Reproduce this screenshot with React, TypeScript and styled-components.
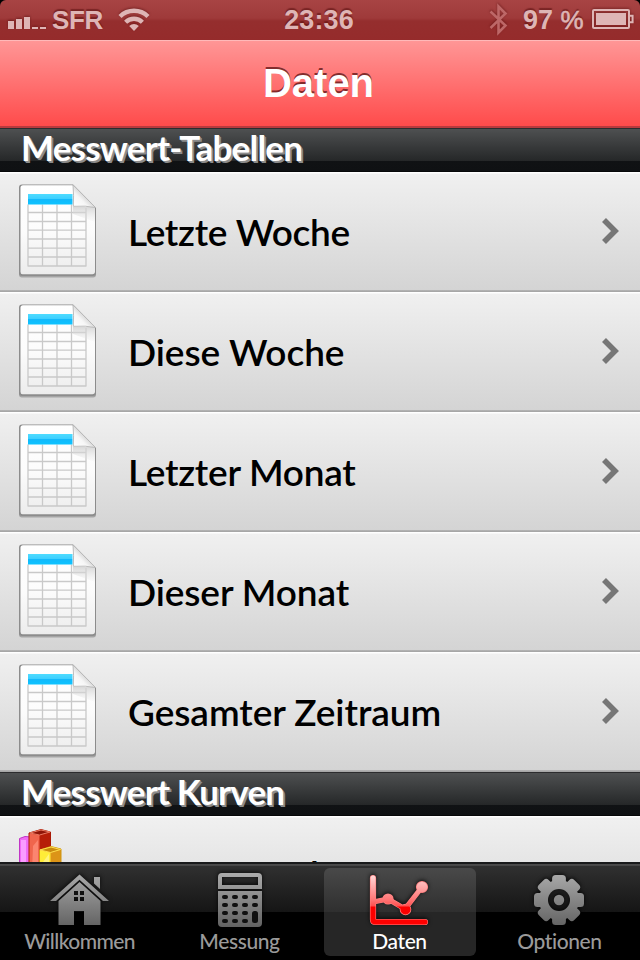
import React from "react";
import styled, { createGlobalStyle, css } from "styled-components";

const GlobalStyle = createGlobalStyle`
  * { box-sizing: border-box; }
  body { margin: 0; background: #000; }
`;

const Screen = styled.div`
  width: 640px;
  height: 960px;
  display: flex;
  flex-direction: column;
  overflow: hidden;
  background: #000;
  font-family: "Lato", sans-serif;
`;

const StatusBar = styled.header`
  flex: none;
  height: 40px;
  display: grid;
  grid-template-columns: 1fr 90px 1fr;
  align-items: center;
  border-radius: 6px 6px 0 0;
  background: linear-gradient(#a84444 0, #9f3a3a 18px, #952e2e 21px, #952b2b 100%);
  color: #deb5b5;
  font: 700 27px/40px "Liberation Sans", Arial, sans-serif;
  text-shadow: 0 -2px 1px rgba(80, 10, 10, 0.5);
  svg {
    display: block;
    filter: drop-shadow(0 -1px 1px rgba(80, 10, 10, 0.5));
  }
`;

const StatusGroup = styled.div<{ $end?: boolean }>`
  display: flex;
  height: 40px;
  align-items: center;
  justify-content: ${(p) => (p.$end ? "flex-end" : "flex-start")};
  padding: ${(p) => (p.$end ? "0 4px 0 0" : "0 0 0 8px")};
`;

const Carrier = styled.span`
  width: 66px;
  margin-left: 6px;
  font-size: 26px;
  letter-spacing: -0.3px;
`;

const Clock = styled.span`
  text-align: center;
  letter-spacing: 0.1px;
  padding-right: 2px;
`;

const Charge = styled.span`
  width: 62px;
  margin: 0 7px 0 14px;
  white-space: nowrap;
`;

const Percent = styled.span`
  font-weight: 400;
  font-size: 26px;
  -webkit-text-stroke: 0.6px #deb5b5;
`;

const TitleBar = styled.h1`
  flex: none;
  height: 88px;
  margin: 0;
  padding-right: 3px;
  border-top: 1px solid #ffb9b9;
  border-bottom: 2px solid #b83a3e;
  background: linear-gradient(#ff9696, #ff4b4b);
  color: #fff;
  text-align: center;
  font: 700 40px/84px "Liberation Sans", Arial, sans-serif;
  text-shadow: 0 -2px 0 rgba(90, 20, 20, 0.75);
`;

const List = styled.main`
  flex: 1;
  min-height: 0;
  overflow: hidden;
`;

const SectionTitle = styled.h2`
  height: 44px;
  margin: 0;
  padding-left: 21px;
  border-top: 1px solid #2c2c2e;
  background: linear-gradient(#4e5051 0, #252728 32px, #101214 32px, #0f1113 42px, #000 100%);
  color: #fff;
  font-size: 35px;
  font-weight: 700;
  line-height: 36px;
  letter-spacing: -0.8px;
  text-shadow: 1px 1px 0 #8b8b8b, 2px 2px 0 #8b8b8b;
`;

const Row = styled.div`
  height: 120px;
  display: flex;
  align-items: center;
  padding: 0 20px 0 16px;
  background: linear-gradient(#fff 0, #fff 1px, #f0f0f0 2px, #d4d4d4 118px, #b5b5b5 118px, #a2a2a2 120px);
  svg { flex: none; display: block; }
`;

const RowLabel = styled.span<{ $spacing?: number; $lift?: number }>`
  flex: 1;
  padding-left: 2px;
  padding-bottom: ${(p) => p.$lift ?? 0}px;
  color: #000;
  font-size: 37px;
  font-weight: 600;
  line-height: ${(p) => 120 - (p.$lift ?? 0)}px;
  letter-spacing: ${(p) => p.$spacing ?? 0}px;
  white-space: nowrap;
`;

const TabBar = styled.nav`
  flex: none;
  height: 98px;
  display: grid;
  grid-template-columns: repeat(4, 160px);
  padding-top: 6px;
  background: linear-gradient(#191a1b 0, #191a1b 2px, #4c4c4c 2px, #454545 4px, #303030 4px, #151515 50px, #000 50px);
`;

const Tab = styled.div<{ $active?: boolean }>`
  height: 88px;
  margin: 0 4px;
  padding-top: 2px;
  display: flex;
  flex-direction: column;
  align-items: center;
  border-radius: 6px;
  color: ${(p) => (p.$active ? "#fff" : "#9a9a9a")};
  ${(p) =>
    p.$active &&
    css`
      background: linear-gradient(#494949 0, #2f2f2f 44px, #262626 44px);
    `}
  svg { display: block; filter: drop-shadow(0 -1px 2px rgba(0, 0, 0, 0.8)); }
`;

const TabLabel = styled.span<{ $spacing: number }>`
  padding-right: 1px;
  font-size: 21px;
  font-weight: 500;
  line-height: 22px;
  letter-spacing: ${(p) => p.$spacing}px;
`;

function SignalIcon() {
  return (
    <svg width="38" height="40" viewBox="8 0 38 40" fill="#deb5b5" shapeRendering="crispEdges">
      <path d="M8 21h6v8H8zM16 19h6v10h-6zM24 17h6v12h-6zM32 27h6v2h-6zM40 27h6v2h-6z" />
    </svg>
  );
}

function WifiIcon() {
  return (
    <svg width="32" height="40" viewBox="0 0 32 40" fill="none" stroke="#deb5b5" strokeWidth="4.4">
      <path d="M2 16.500a20 20 0 0 1 28 0" />
      <path d="M7.6 22.200a12 12 0 0 1 16.8 0" />
      <path d="M16 31l-4.800-5a7 7 0 0 1 9.600 0z" fill="#deb5b5" stroke="none" />
    </svg>
  );
}

function BluetoothIcon() {
  return (
    <svg width="20" height="40" viewBox="0 0 20 40" fill="none" stroke="#bd6767" strokeWidth="2.6">
      <path d="M1.500 11.500L16.500 25.500L9.500 32.500V6.500L16.500 13.500L1.500 28" />
    </svg>
  );
}

function BatteryIcon() {
  return (
    <svg width="44" height="40" viewBox="0 0 44 40">
      <rect x="1" y="10" width="36" height="18" rx="1" fill="none" stroke="#deb5b5" strokeWidth="2" />
      <rect x="4" y="13" width="30" height="12" fill="#deb5b5" />
      <path d="M38 15.800h2.600v6.400H38" fill="none" stroke="#deb5b5" strokeWidth="2" />
    </svg>
  );
}

function SheetIcon() {
  return (
    <svg width="110" height="120" viewBox="16 0 110 120">
      <defs>
        <linearGradient id="paper" x1="0" y1="0" x2="0" y2="1">
          <stop offset="0" stopColor="#fff" />
          <stop offset="0.5" stopColor="#fcfcfc" />
          <stop offset="1" stopColor="#ececec" />
        </linearGradient>
        <linearGradient id="band" x1="0" y1="0" x2="0" y2="1">
          <stop offset="0" stopColor="#4fdcff" />
          <stop offset="0.45" stopColor="#3ccfff" />
          <stop offset="0.5" stopColor="#12b9fb" />
          <stop offset="1" stopColor="#0dc3ff" />
        </linearGradient>
        <linearGradient id="curl" gradientUnits="userSpaceOnUse" x1="74" y1="35" x2="86" y2="23">
          <stop offset="0" stopColor="#fff" />
          <stop offset="0.6" stopColor="#f6f6f6" />
          <stop offset="1" stopColor="#cfcfcf" />
        </linearGradient>
        <linearGradient id="shade" gradientUnits="userSpaceOnUse" x1="0" y1="35" x2="0" y2="52">
          <stop offset="0" stopColor="#cfcfcf" stopOpacity="0.8" />
          <stop offset="1" stopColor="#e8e8e8" stopOpacity="0" />
        </linearGradient>
      </defs>
      <path d="M22 15.500H73L96 38V102.500q0 3-3 3H22q-3 0-3-3V18q0-2.500 3-2.500z" fill="#666" opacity=".45" />
      <path d="M22 12.500H73L96 36V101q0 3-3 3H22q-3 0-3-3V15.500q0-3 3-3z" fill="#8c8c8c" />
      <path d="M23 13.200H72.500L95 35.500V99.500q0 2.700-2.700 2.700H22.500q-2 0-2-2.500V15.700q0-2.500 2.500-2.500z" fill="url(#paper)" />
      <path
        d="M28 32.500V94.500M42.500 32.500V94.500M57 32.500V94.500M71.500 32.500V94.500M86 36V94.500M28 40.500H86M28 49.500H86M28 58.200H86M28 67H86M28 76.200H86M28 85H86M28 94H86"
        fill="none"
        stroke="#c9c9c9"
        strokeWidth="1.300"
      />
      <rect x="28" y="22" width="44.500" height="10.500" fill="url(#band)" />
      <path d="M73 35H95V50L84 46L73 42z" fill="url(#shade)" />
      <path d="M73 12.800Q74 24 73.300 34.300Q86 33.500 95.500 35.500z" fill="url(#curl)" stroke="#b4b4b4" strokeWidth="0.900" />
    </svg>
  );
}

function BarsIcon() {
  return (
    <svg width="110" height="120" viewBox="16 0 110 120">
      <path d="M19.500 22.500L25 20.500L31 21V80H19.500z" fill="#f06cf4" stroke="#c135c6" />
      <path d="M21 24H26V80H21z" fill="#fa9dff" />
      <path d="M29 17L41 13.500L50.500 16V80H29z" fill="#b61d08" stroke="#a91804" />
      <path d="M29.500 17.500L39.500 19V80H29.500z" fill="#f0654d" />
      <path d="M30 17L41 14L50 16L39.500 19z" fill="#8f1408" stroke="#e97a62" />
      <path d="M33 30L38 24V80H31z" fill="#ff937f" opacity=".7" />
      <path d="M39.500 34L51 30.500L61 33V80H39.500z" fill="#dc9417" stroke="#cf9610" />
      <path d="M40 34L50.500 36.500V80H40z" fill="#ffec38" />
      <path d="M40 34L51 31L60.500 33.500L50.500 36.500z" fill="#c98a0d" stroke="#ffe04e" />
      <path d="M43 46L49 38V80H43z" fill="#fff69a" opacity=".7" />
    </svg>
  );
}

function Chevron() {
  return (
    <svg width="20" height="28" viewBox="600 46 20 28" fill="none" stroke="#767676" strokeWidth="5.600">
      <path d="M604 48L615 59L604 70" />
    </svg>
  );
}

function TabGradient() {
  return (
    <defs>
      <linearGradient id="metal" gradientUnits="userSpaceOnUse" x1="0" y1="4" x2="0" y2="57">
        <stop offset="0" stopColor="#a9a9a9" />
        <stop offset="1" stopColor="#626262" />
      </linearGradient>
    </defs>
  );
}

function HomeIcon() {
  return (
    <svg width="64" height="60" viewBox="0 0 64 60" fill="url(#metal)">
      <TabGradient />
      <path d="M46 7H52V19L46 13.500z" />
      <path d="M31.500 4.500L61 31H55L31.500 9.800L8 31H2z" />
      <path
        fillRule="evenodd"
        d="M31.500 12L52.500 31V55H36V41H26V55H10.500V31zM26 21V25H30V21zM32 21V25H36V21zM26 27V31H30V27zM32 27V31H36V27z"
      />
    </svg>
  );
}

function CalculatorIcon() {
  const columns = [17, 27, 37, 47];
  const rows = [27, 35, 43, 51];
  return (
    <svg width="64" height="60" viewBox="0 0 64 60">
      <path fillRule="evenodd" fill="url(#metal)" d="M14 3H50Q54 3 54 7V19H10V7Q10 3 14 3zM14 7V15H50V7z" />
      <path fill="url(#metal)" d="M10 21H54V53Q54 57 50 57H14Q10 57 10 53z" />
      <g fill="#101010">
        {rows.map((y, r) =>
          columns.map((x, c) =>
            c === 3 && r > 1 ? null : <rect key={`${r}-${c}`} x={x - 3} y={y - 2} width="6" height="4" rx="2" />
          )
        )}
        <rect x="44" y="41" width="6" height="12" rx="2.500" />
      </g>
    </svg>
  );
}

function ChartIcon() {
  const axes = "M5 8V49.500Q5 52 7.500 52H57";
  const trend = "M5 32L20 29L37 39L54 17";
  const dots = [[20, 29, 4.8], [37.5, 39.5, 5], [54, 17, 5.3]];
  return (
    <svg width="64" height="60" viewBox="0 0 64 60" strokeLinecap="round" strokeLinejoin="round">
      <defs>
        <linearGradient id="ember" gradientUnits="userSpaceOnUse" x1="0" y1="5" x2="0" y2="55">
          <stop offset="0" stopColor="#ffd9d9" />
          <stop offset="0.500" stopColor="#ff7474" />
          <stop offset="0.620" stopColor="#ff5050" />
          <stop offset="0.640" stopColor="#fa0000" />
          <stop offset="1" stopColor="#ff0000" />
        </linearGradient>
      </defs>
      <g fill="none" stroke="#ff8080">
        <path d={axes} strokeWidth="6.200" />
        <path d={trend} strokeWidth="5.200" />
        {dots.map(([x, y, r]) => <circle key={x} cx={x} cy={y} r={r} strokeWidth="1.600" />)}
      </g>
      <g fill="none" stroke="url(#ember)">
        <path d={axes} strokeWidth="5" />
        <path d={trend} strokeWidth="4" />
      </g>
      {dots.map(([x, y, r]) => <circle key={x} cx={x} cy={y} r={r} fill="url(#ember)" />)}
    </svg>
  );
}

function GearIcon() {
  return (
    <svg width="64" height="60" viewBox="0.500 0 64 60">
      <defs>
        <mask id="gear">
          <g fill="#fff">
            <circle cx="31.500" cy="30" r="20" />
            {[0, 45, 90, 135].map((a) => (
              <rect key={a} x="24.600" y="5" width="13.800" height="50" rx="3.500" transform={`rotate(${a} 31.500 30)`} />
            ))}
          </g>
          <circle cx="31.500" cy="30" r="11" fill="#000" />
          <circle cx="31.500" cy="30" r="5.200" fill="#fff" />
        </mask>
      </defs>
      <rect width="64" height="60" fill="url(#metal)" mask="url(#gear)" />
    </svg>
  );
}

const tables = [
  { label: "Letzte Woche", spacing: -0.3 },
  { label: "Diese Woche", spacing: -0.05 },
  { label: "Letzter Monat", spacing: -0.25 },
  { label: "Dieser Monat", spacing: -0.1 },
  { label: "Gesamter Zeitraum", spacing: -0.05 },
];

const tabs = [
  { label: "Willkommen", spacing: -0.6, Icon: HomeIcon },
  { label: "Messung", spacing: -0.4, Icon: CalculatorIcon },
  { label: "Daten", spacing: -0.4, Icon: ChartIcon, active: true },
  { label: "Optionen", spacing: -0.4, Icon: GearIcon },
];

export default function App() {
  return (
    <Screen>
      <GlobalStyle />
      <StatusBar>
        <StatusGroup>
          <SignalIcon />
          <Carrier>SFR</Carrier>
          <WifiIcon />
        </StatusGroup>
        <Clock>23:36</Clock>
        <StatusGroup $end>
          <BluetoothIcon />
          <Charge>
            97 <Percent>%</Percent>
          </Charge>
          <BatteryIcon />
        </StatusGroup>
      </StatusBar>
      <TitleBar>Daten</TitleBar>
      <List>
        <SectionTitle>Messwert-Tabellen</SectionTitle>
        {tables.map(({ label, spacing }) => (
          <Row key={label}>
            <SheetIcon />
            <RowLabel $spacing={spacing}>{label}</RowLabel>
            <Chevron />
          </Row>
        ))}
        <SectionTitle>Messwert Kurven</SectionTitle>
        <Row>
          <BarsIcon />
          <RowLabel $spacing={-0.3} $lift={4}>Letzte Woche</RowLabel>
          <Chevron />
        </Row>
      </List>
      <TabBar>
        {tabs.map(({ label, spacing, Icon, active }) => (
          <Tab key={label} $active={active}>
            <Icon />
            <TabLabel $spacing={spacing}>{label}</TabLabel>
          </Tab>
        ))}
      </TabBar>
    </Screen>
  );
}
